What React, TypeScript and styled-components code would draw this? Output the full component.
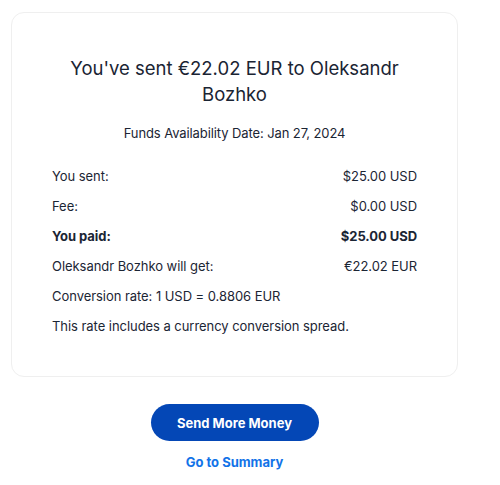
import React from "react";
import styled, { createGlobalStyle } from "styled-components";

const Global = createGlobalStyle`
  html, body { margin: 0; padding: 0; background: #ffffff; }
  body { font-family: Inter, "Liberation Sans", Arial, sans-serif; color: #1b2534; }
`;

const Page = styled.div`
  width: 500px;
  padding: 12px 0 0 11px;
  box-sizing: border-box;
  display: flex;
  flex-direction: column;
  align-items: flex-start;
`;

const Card = styled.section`
  width: 447px;
  height: 365px;
  box-sizing: border-box;
  border: 1px solid #efefef;
  border-radius: 13px;
  padding: 42px 40px 0 40px;
  display: flex;
  flex-direction: column;
`;

const Title = styled.h1`
  margin: 0;
  font-size: 18.5px;
  font-weight: 400;
  line-height: 26px;
  text-align: center;
  color: #1a2433;
`;

const DateLine = styled.p`
  margin: 16px 0 0;
  font-size: 13px;
  line-height: 20px;
  letter-spacing: -0.1px;
  text-align: center;
`;

const Rows = styled.div`
  margin-top: 23px;
  display: flex;
  flex-direction: column;
  gap: 10px;
`;

const Row = styled.div<{ $bold?: boolean }>`
  display: flex;
  justify-content: space-between;
  font-size: 13px;
  line-height: 20px;
  letter-spacing: -0.05px;
  font-weight: ${(p) => (p.$bold ? 700 : 400)};
`;

const Actions = styled.div`
  width: 447px;
  margin-top: 27px;
  display: flex;
  flex-direction: column;
  align-items: center;
  gap: 12px;
`;

const Primary = styled.button`
  width: 168px;
  height: 37px;
  border: none;
  border-radius: 19px;
  background: #0447b6;
  color: #ffffff;
  font-family: inherit;
  font-size: 13px;
  font-weight: 700;
  cursor: pointer;
`;

const LinkBtn = styled.a`
  color: #1273e8;
  font-size: 13px;
  font-weight: 700;
  text-decoration: none;
  line-height: 18px;
`;

export default function App() {
  return (
    <>
      <Global />
      <Page>
        <Card>
          <Title>You've sent €22.02 EUR to Oleksandr Bozhko</Title>
          <DateLine>Funds Availability Date: Jan 27, 2024</DateLine>
          <Rows>
            <Row><span>You sent:</span><span>$25.00 USD</span></Row>
            <Row><span>Fee:</span><span>$0.00 USD</span></Row>
            <Row $bold><span>You paid:</span><span>$25.00 USD</span></Row>
            <Row><span>Oleksandr Bozhko will get:</span><span>€22.02 EUR</span></Row>
            <Row><span>Conversion rate: 1 USD = 0.8806 EUR</span></Row>
            <Row><span>This rate includes a currency conversion spread.</span></Row>
          </Rows>
        </Card>
        <Actions>
          <Primary>Send More Money</Primary>
          <LinkBtn href="#">Go to Summary</LinkBtn>
        </Actions>
      </Page>
    </>
  );
}
